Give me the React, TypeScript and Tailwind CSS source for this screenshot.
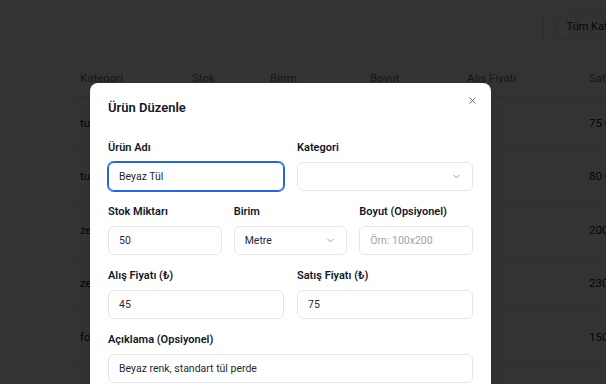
import { X, ChevronDown } from "lucide-react";

const rows = [
  { kategori: "tul", stok: "50", birim: "Metre", boyut: "-", alis: "45 ₺", satis: "75 ₺" },
  { kategori: "tul", stok: "30", birim: "Metre", boyut: "-", alis: "50 ₺", satis: "80 ₺" },
  { kategori: "zebra", stok: "12", birim: "Adet", boyut: "-", alis: "90 ₺", satis: "200 ₺" },
  { kategori: "zebra", stok: "8", birim: "Adet", boyut: "-", alis: "95 ₺", satis: "230 ₺" },
  { kategori: "fon", stok: "20", birim: "Metre", boyut: "-", alis: "70 ₺", satis: "150 ₺" },
];

const cols = "grid grid-cols-[112px_78px_100px_97px_122px_112px]";

function Field({ label, children }: { label: string; children: React.ReactNode }) {
  return (
    <div className="flex flex-col gap-[6px] min-w-0">
      <label className="text-[11px] leading-4 font-semibold text-[#111827]">{label}</label>
      {children}
    </div>
  );
}

function Input({ value, placeholder, focused }: { value?: string; placeholder?: string; focused?: boolean }) {
  return (
    <div
      className={
        focused
          ? "h-[29px] flex items-center px-[10px] rounded-md border border-[#2563eb] ring-1 ring-[#2563eb] text-[10.5px] text-[#1f2937]"
          : "h-[29px] flex items-center px-[10px] rounded-md border border-[#e5e7eb] text-[10.5px] text-[#1f2937]"
      }
    >
      {value ? <span>{value}</span> : <span className="text-[#9ca3af]">{placeholder}</span>}
    </div>
  );
}

function Select({ value }: { value?: string }) {
  return (
    <div className="h-[29px] flex items-center justify-between px-[10px] rounded-md border border-[#e5e7eb] text-[10.5px] text-[#1f2937]">
      <span>{value ?? ""}</span>
      <ChevronDown className="w-[11px] h-[11px] text-[#6b7280]" strokeWidth={1.5} />
    </div>
  );
}

export default function App() {
  return (
    <div className="relative w-[606px] h-[384px] overflow-hidden bg-white font-['Roboto',sans-serif]">
      {/* page behind the dialog */}
      <div className="flex flex-col">
        <div className="h-[61px] flex items-start pt-[15px]">
          <div className="ml-[543px] w-px h-[25px] bg-[#e5e7eb]" />
          <div className="ml-[12px] w-[80px] h-[25px] border border-r-0 border-[#e5e7eb] rounded-l-md flex items-center pl-[10px] text-[11px] text-[#111827] whitespace-nowrap overflow-hidden">
            Tüm Kategoriler
          </div>
        </div>
        <div className="pl-[68px]">
          <div className={`${cols} h-[36px] items-center border-b border-[#e5e7eb] text-[11.5px] text-[#6b7280]`}>
            <div className="px-3">Kategori</div>
            <div className="px-3">Stok</div>
            <div className="px-3">Birim</div>
            <div className="px-3">Boyut</div>
            <div className="px-3">Alış Fiyatı</div>
            <div className="px-3 whitespace-nowrap">Satış Fiyatı</div>
          </div>
          {rows.map((r, i) => (
            <div key={i} className={`${cols} h-[53.5px] items-center border-b border-[#e5e7eb] text-[11.5px] text-[#111827]`}>
              <div className="px-3">{r.kategori}</div>
              <div className="px-3">{r.stok}</div>
              <div className="px-3">{r.birim}</div>
              <div className="px-3">{r.boyut}</div>
              <div className="px-3">{r.alis}</div>
              <div className="px-3 whitespace-nowrap">{r.satis}</div>
            </div>
          ))}
        </div>
      </div>

      {/* overlay */}
      <div className="absolute inset-0 bg-black/80" />

      {/* dialog */}
      <div className="absolute left-[90px] top-[83px] w-[401px] rounded-lg bg-white px-[18px] pt-[15px] pb-6 shadow-lg">
        <button className="absolute right-[13px] top-[12px] text-[#4b5563]">
          <X className="w-[11px] h-[11px]" strokeWidth={1.75} />
        </button>
        <h2 className="text-[13px] leading-5 font-semibold text-[#111827]">Ürün Düzenle</h2>
        <div className="mt-[22px] flex flex-col gap-[13px]">
          <div className="grid grid-cols-2 gap-[13px]">
            <Field label="Ürün Adı">
              <Input value="Beyaz Tül" focused />
            </Field>
            <Field label="Kategori">
              <Select />
            </Field>
          </div>
          <div className="grid grid-cols-3 gap-[12px]">
            <Field label="Stok Miktarı">
              <Input value="50" />
            </Field>
            <Field label="Birim">
              <Select value="Metre" />
            </Field>
            <Field label="Boyut (Opsiyonel)">
              <Input placeholder="Örn: 100x200" />
            </Field>
          </div>
          <div className="grid grid-cols-2 gap-[13px]">
            <Field label="Alış Fiyatı (₺)">
              <Input value="45" />
            </Field>
            <Field label="Satış Fiyatı (₺)">
              <Input value="75" />
            </Field>
          </div>
          <Field label="Açıklama (Opsiyonel)">
            <Input value="Beyaz renk, standart tül perde" />
          </Field>
        </div>
      </div>
    </div>
  );
}
